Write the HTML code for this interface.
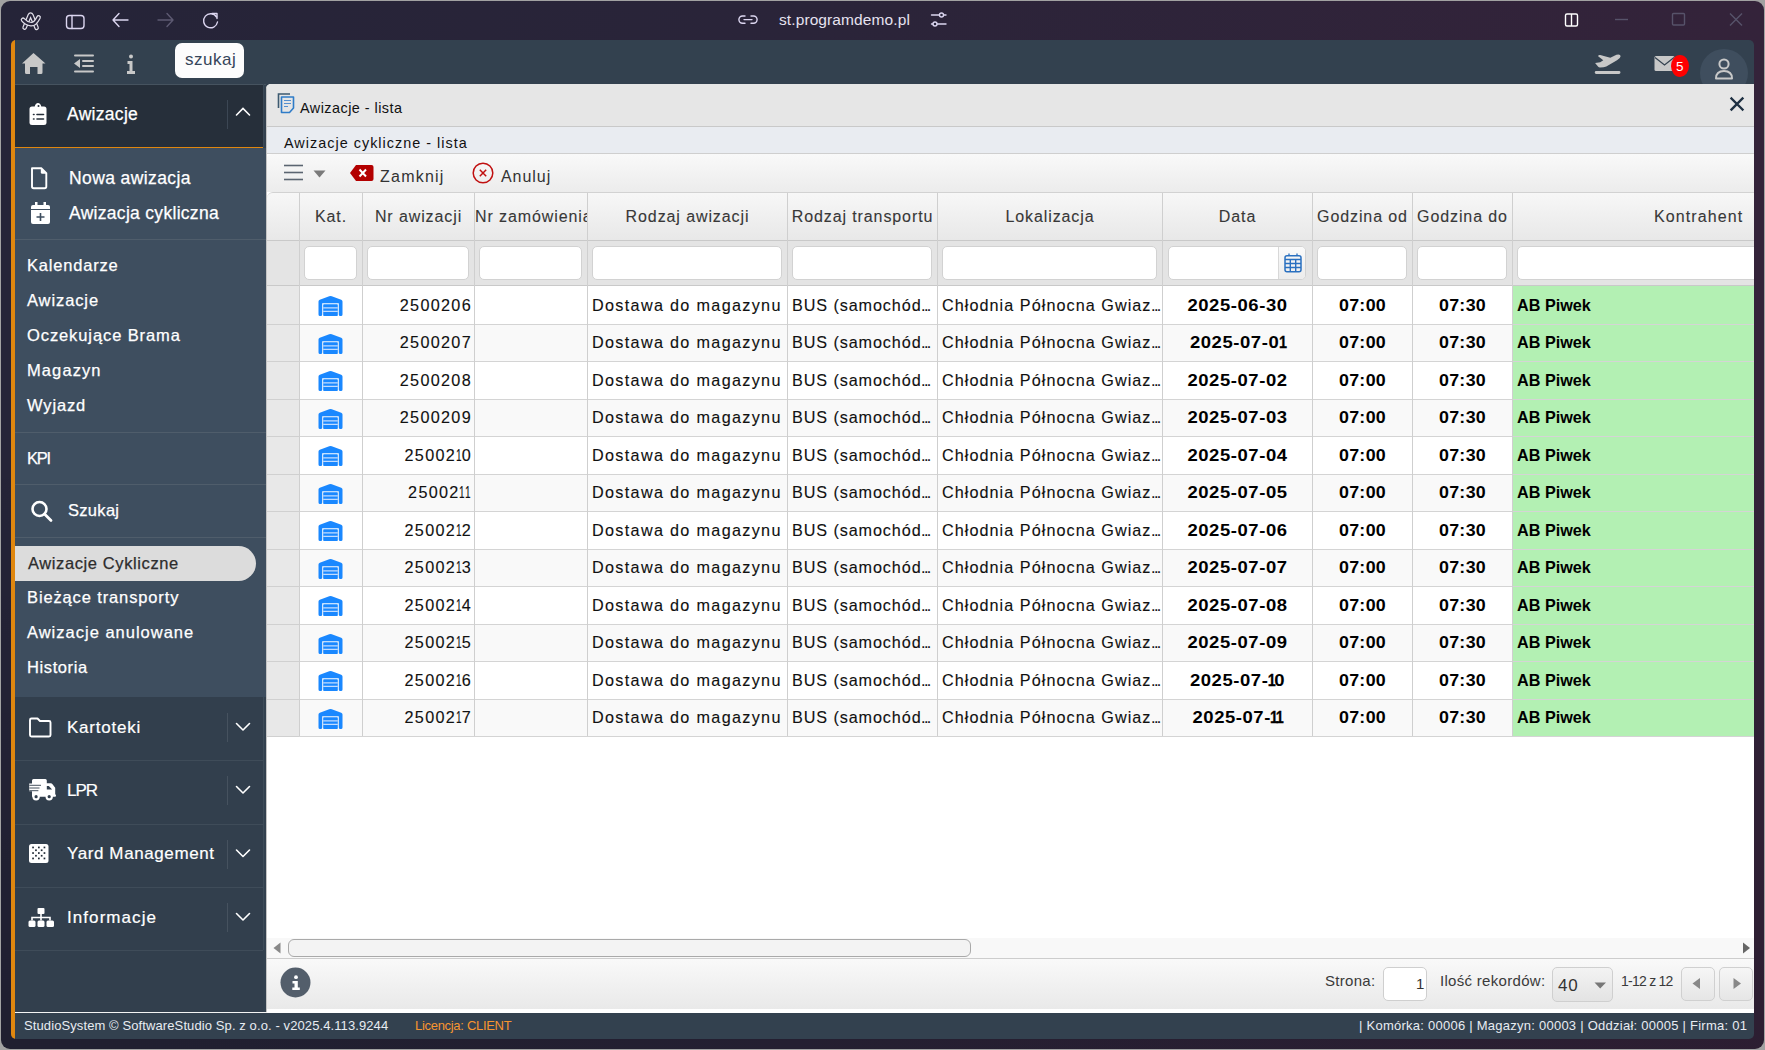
<!DOCTYPE html>
<html><head><meta charset="utf-8">
<style>
*{box-sizing:border-box;margin:0;padding:0}
html,body{width:1765px;height:1050px;overflow:hidden;background:#a2a2a2;font-family:"Liberation Sans",sans-serif;position:relative}
.a{position:absolute}
.t{position:absolute;white-space:nowrap;line-height:1}
svg{position:absolute;overflow:visible}
.sb{color:#fff;font-size:16.5px;letter-spacing:0.6px;-webkit-text-stroke:0.25px}
.sec{color:#fff;font-size:17px;letter-spacing:0.4px;-webkit-text-stroke:0.2px}
.hl{position:absolute;left:15px;width:251px;height:1px;background:#4f5d6b}
.dl{position:absolute;left:15px;width:248px;height:1px;background:#3f4c59}
.chev{position:absolute;left:236px;width:14px;height:8px}
.vsep{position:absolute;left:227px;width:1px;height:29px;background:#46525f}
.hd{font-size:16px;color:#383838;letter-spacing:0.9px}
.cl{font-size:16.2px;color:#111;letter-spacing:1.2px}
.cb{font-size:16.2px;color:#000;font-weight:bold;letter-spacing:1.6px}
.cb2{font-size:16.2px;color:#000;font-weight:bold;letter-spacing:0px}
.inp{background:#fff;border:1px solid #d2d2d2;border-radius:5px}
.pg{font-size:15px;color:#333;letter-spacing:0.7px}
.ft{font-size:13.5px;color:#dfe3ea;letter-spacing:0.35px}
.hd{font-size:16px;color:#383838;letter-spacing:0.9px;-webkit-text-stroke:0.1px #383838}
.cl{font-size:16.2px;color:#111;letter-spacing:1.32px;-webkit-text-stroke:0.12px #111}
.cb{font-size:16.2px;color:#000;font-weight:bold;letter-spacing:0.3px;transform:scaleX(1.1);transform-origin:50% 0}
.cd{font-size:16.2px;color:#000;font-weight:bold;letter-spacing:0.5px;transform:scaleX(1.14);transform-origin:50% 0}
.cb2{font-size:16.2px;color:#000;font-weight:bold;letter-spacing:0px}
.inp{background:#fff;border:1px solid #d2d2d2;border-radius:5px}
.pg{font-size:15px;color:#3a3a3a;letter-spacing:0.3px}
.ft{font-size:13px;color:#e8ecf2;letter-spacing:0.1px}
.ell{letter-spacing:-1.6px;margin-left:-0.5px}
</style></head><body>
<!-- browser window -->
<div class="a" style="left:1px;top:1px;width:1763px;height:1048px;border-radius:9px;background:linear-gradient(180deg,rgba(0,0,0,0) 0%,rgba(0,0,0,0) 40%,rgba(0,0,0,0.15) 100%),linear-gradient(90deg,#252438 0%,#2a2439 45%,#34233a 100%)"></div>
<!-- app frame -->
<div class="a" style="left:11px;top:40px;width:1743px;height:999px;background:#33414f;border-radius:5px 5px 5px 5px;overflow:hidden">
  <div class="a" style="left:0;top:0;width:4px;height:999px;background:#e0870f"></div>
  <div class="a" style="left:4px;top:657px;width:248px;height:315px;background:#323f4d"></div>
</div>

<!-- ===== chrome icons ===== -->
<svg style="left:0;top:0" width="1765" height="40">
<g fill="none" stroke-linecap="round" stroke-linejoin="round">
  <path d="M24.6 27.6 L29.6 15.6 Q30.6 13.6 31.6 15.6 L36.6 27.8" stroke="#e2e0ea" stroke-width="4.6"/>
  <path d="M24.6 27.6 L29.6 15.6 Q30.6 13.6 31.6 15.6 L36.6 27.8" stroke="#27243a" stroke-width="2.2"/>
  <path d="M23 19.8 Q26 23.5 31 24.2 Q35 24.5 38.6 17.4" stroke="#e2e0ea" stroke-width="4.6"/>
  <path d="M23 19.8 Q26 23.5 31 24.2 Q35 24.5 38.6 17.4" stroke="#27243a" stroke-width="2.2"/>
</g>

  <g fill="none" stroke="#dcd6f0" stroke-width="1.4" stroke-linecap="round" stroke-linejoin="round">
    <!-- logo -->
    
    <!-- sidebar -->
    <rect x="66.5" y="15.5" width="17.5" height="13" rx="3"/>
    <line x1="72" y1="15.5" x2="72" y2="28.5"/>
    <!-- back -->
    <path d="M128 20 H113 M119 13.5 L113 20 L119 26.5"/>
    <!-- refresh -->
    <path d="M216.5 17 A7 7 0 1 0 217.5 22"/>
    <path d="M212 13.5 H217 V18.5"/>
    <!-- link -->
    <path d="M745 16 H742.5 A3.6 3.6 0 0 0 742.5 23.2 H745 M751 16 H753.5 A3.6 3.6 0 0 1 753.5 23.2 H751 M744 19.6 H752"/>
    <!-- tune -->
    <path d="M931.5 15 H946 M931.5 24 H946"/>
    <circle cx="941.5" cy="15" r="2" fill="#27243a"/>
    <circle cx="935" cy="24" r="2" fill="#27243a"/>
  </g>
  <g fill="none" stroke="#5d5a72" stroke-width="1.4" stroke-linecap="round" stroke-linejoin="round">
    <path d="M158 20 H173 M167 13.5 L173 20 L167 26.5"/>
  </g>
  <!-- right window controls -->
  <g fill="none" stroke-width="1.4">
    <rect x="1565.5" y="14" width="12" height="12" rx="1.5" stroke="#ffffff"/>
    <line x1="1571.5" y1="14" x2="1571.5" y2="26" stroke="#ffffff"/>
    <line x1="1615" y1="19.5" x2="1628" y2="19.5" stroke="#57536a"/>
    <rect x="1672.5" y="13.5" width="12" height="11.5" rx="1" stroke="#57536a"/>
    <path d="M1730 13.5 L1742 25.5 M1742 13.5 L1730 25.5" stroke="#57536a"/>
  </g>
</svg>
<div class="t" style="left:779px;top:12px;font-size:15.5px;color:#e6e2f0;letter-spacing:0.1px">st.programdemo.pl</div>

<!-- ===== top bar ===== -->
<div class="a" style="left:15px;top:84px;width:251px;height:1px;background:#46535f"></div>
<svg style="left:0;top:0" width="300" height="90">
  <!-- home -->
  <path d="M33.5 53 L45.5 63.5 H42.5 V72.5 Q42.5 74 41 74 H37.5 V67 H30 V74 H26.5 Q25 74 25 72.5 V63.5 H22 Z" fill="#c8c8c8"/>
  <!-- indent -->
  <g stroke="#c8c8c8" stroke-width="2" stroke-linecap="round">
    <line x1="75" y1="55.5" x2="93" y2="55.5"/>
    <line x1="83" y1="61" x2="93" y2="61"/>
    <line x1="83" y1="66" x2="93" y2="66"/>
    <line x1="75" y1="71.5" x2="93" y2="71.5"/>
  </g>
  <path d="M74 63.5 L80 59 V68 Z" fill="#c8c8c8"/>
  <!-- i -->
  <circle cx="131" cy="56.5" r="2" fill="#c8c8c8"/>
  <path d="M127.5 61 H132.5 V71 H135 V74 H127 V71 H129.5 V64 H127.5 Z" fill="#c8c8c8"/>
</svg>
<div class="a" style="left:175px;top:43px;width:69px;height:35px;background:#fcfcfc;border-radius:7px"></div>
<div class="t" style="left:185px;top:51px;font-size:17px;color:#35455a;letter-spacing:0.5px">szukaj</div>

<svg style="left:1580px;top:40px" width="185" height="50">
  <!-- plane landing -->
  <path d="M15.1 22.9 L20.2 22.3 L23.3 20.2 L18.1 16.3 Q18.3 14.7 20.2 15 L30.3 17.8 L36.5 14.8 Q40.5 13.8 40.6 16.3 Q40.4 18.6 37 20.2 L26.3 26.6 Q24 27.6 20 27.6 Q18.8 27.6 18.2 26.8 Z" fill="#c8c8c8"/>
  <rect x="14.8" y="30.9" width="25.6" height="3" rx="1.3" fill="#c8c8c8"/>
  <!-- mail -->
  <rect x="74.5" y="16" width="20" height="15" rx="1.5" fill="#c8c8c8"/>
  <path d="M75 17.5 L84.5 25 L94 17.5" fill="none" stroke="#34414f" stroke-width="1.2"/>
  <ellipse cx="100" cy="26" rx="9" ry="11" fill="#ff0000"/>
  <!-- avatar -->
  <circle cx="144" cy="33" r="24" fill="#3f4e5e"/>
  <circle cx="144" cy="24" r="4.6" fill="none" stroke="#c8c8c8" stroke-width="2"/>
  <path d="M136 38.5 Q136 31 144 31 Q152 31 152 38.5 Z" fill="none" stroke="#c8c8c8" stroke-width="2" stroke-linejoin="round"/>
</svg>
<div class="t" style="left:1676px;top:60px;font-size:13.5px;color:#fff">5</div>

<!-- ===== sidebar ===== -->
<div class="a" style="left:15px;top:85px;width:248px;height:62px;background:#262f3a"></div>
<div class="a" style="left:263px;top:84px;width:1px;height:63px;background:#3b4855"></div>
<div class="a" style="left:15px;top:147px;width:248px;height:1px;background:#e0870f"></div>
<div class="vsep" style="top:100px;background:#3c4754"></div>
<svg style="left:0;top:0" width="266" height="1012">
  <!-- clipboard list -->
  <g fill="#ffffff">
    <path d="M29.5 109 Q29.5 106.5 32 106.5 H34.7 Q35.5 103 38 103 Q40.5 103 41.3 106.5 H44 Q46.5 106.5 46.5 109 V123 Q46.5 125 44 125 H32 Q29.5 125 29.5 123 Z"/>
  </g>
  <g stroke="#262f3a" stroke-width="1.6" stroke-linecap="round">
    <line x1="33.5" y1="114.5" x2="34" y2="114.5"/><line x1="37" y1="114.5" x2="43.5" y2="114.5"/>
    <line x1="33.5" y1="119" x2="34" y2="119"/><line x1="37" y1="119" x2="43.5" y2="119"/>
  </g>
  <circle cx="38.5" cy="106" r="1" fill="#262f3a"/>
  <path d="M236.5 115 L243 108.5 L249.5 115" fill="none" stroke="#fff" stroke-width="1.6" stroke-linecap="round"/>
</svg>
<div class="t sb" style="left:67px;top:106px;font-size:17.5px;letter-spacing:0.3px">Awizacje</div>

<div class="a" style="left:15px;top:148px;width:251px;height:549px;background:#3e4e5f"></div>
<div class="hl" style="top:239px"></div>
<div class="hl" style="top:432px"></div>
<div class="hl" style="top:484px"></div>
<div class="hl" style="top:537px"></div>
<svg style="left:0;top:0" width="266" height="700">
  <!-- file -->
  <path d="M32 168.3 H41.5 L46.3 173.2 V186.5 Q46.3 188.2 44.6 188.2 H33.7 Q32 188.2 32 186.5 Z" fill="none" stroke="#fff" stroke-width="1.9" stroke-linejoin="round"/>
  <path d="M40.8 168.3 L46.3 173.8 H42.3 Q40.8 173.8 40.8 172.3 Z" fill="#fff"/>
  <!-- calendar plus -->
  <path d="M31 207 Q31 205 33 205 H48 Q50 205 50 207 V222 Q50 224 48 224 H33 Q31 224 31 222 Z" fill="#fff"/>
  <rect x="35" y="202" width="2.5" height="4" fill="#fff"/>
  <rect x="43.5" y="202" width="2.5" height="4" fill="#fff"/>
  <line x1="31" y1="209.5" x2="50" y2="209.5" stroke="#3e4e5f" stroke-width="1"/>
  <path d="M40.5 213 V221 M36.5 217 H44.5" stroke="#3e4e5f" stroke-width="1.6"/>
  <!-- search -->
  <circle cx="39.5" cy="509" r="7" fill="none" stroke="#fff" stroke-width="2.6"/>
  <line x1="44.5" y1="514" x2="51" y2="520.5" stroke="#fff" stroke-width="2.8" stroke-linecap="round"/>
</svg>
<div class="t sb" style="left:69px;top:169.5px;font-size:17.5px;letter-spacing:0.4px">Nowa awizacja</div>
<div class="t sb" style="left:69px;top:205px;font-size:17.5px;letter-spacing:0.3px">Awizacja cykliczna</div>
<div class="t sb" style="letter-spacing:0.8px;left:27px;top:257px">Kalendarze</div>
<div class="t sb" style="letter-spacing:0.9px;left:27px;top:292px">Awizacje</div>
<div class="t sb" style="letter-spacing:0.9px;left:27px;top:327px">Oczekujące Brama</div>
<div class="t sb" style="letter-spacing:1.1px;left:27px;top:362px">Magazyn</div>
<div class="t sb" style="letter-spacing:0.85px;left:27px;top:397px">Wyjazd</div>
<div class="t sb" style="letter-spacing:-1.2px;left:27px;top:450px">KPI</div>
<div class="t sb" style="letter-spacing:0.3px;left:68px;top:502px">Szukaj</div>
<div class="a" style="left:15px;top:546px;width:241px;height:35px;background:#dcdcdc;border-radius:0 17.5px 17.5px 0"></div>
<div class="t sb" style="left:28px;top:555px;color:#2d2d2d">Awizacje Cykliczne</div>
<div class="t sb" style="letter-spacing:0.87px;left:27px;top:589px">Bieżące transporty</div>
<div class="t sb" style="letter-spacing:1.0px;left:27px;top:624px">Awizacje anulowane</div>
<div class="t sb" style="left:27px;top:659px">Historia</div>

<!-- collapsed sections -->
<div class="a" style="left:263px;top:697px;width:1px;height:253px;background:#3e4c59"></div>
<div class="dl" style="top:760px"></div>
<div class="dl" style="top:824px"></div>
<div class="dl" style="top:887px"></div>
<div class="dl" style="top:950px"></div>
<div class="vsep" style="top:713px"></div>
<div class="vsep" style="top:776px"></div>
<div class="vsep" style="top:840px"></div>
<div class="vsep" style="top:903px"></div>
<svg style="left:0;top:0" width="266" height="1012">
  <g fill="none" stroke="#fff" stroke-width="1.6" stroke-linecap="round" stroke-linejoin="round">
    <path d="M236.5 723.5 L243 730 L249.5 723.5"/>
    <path d="M236.5 786.5 L243 793 L249.5 786.5"/>
    <path d="M236.5 850 L243 856.5 L249.5 850"/>
    <path d="M236.5 913.5 L243 920 L249.5 913.5"/>
  </g>
  <!-- folder -->
  <path d="M30 720 Q30 718.5 31.5 718.5 H37.5 L40 721 H49 Q50.5 721 50.5 722.5 V735 Q50.5 736.5 49 736.5 H31.5 Q30 736.5 30 735 Z" fill="none" stroke="#fff" stroke-width="1.9" stroke-linejoin="round"/>
  <!-- truck fast -->
  <g fill="#fff">
    <path d="M33.5 779 H45.3 Q46.8 779 46.8 780.5 V783.3 H50.8 Q51.8 783.3 52.5 784.2 L55.2 787.8 V794.3 Q56 794.5 56 795.5 Q56 796.7 55 796.7 H32 V791.2 H29.2 V783.4 H32 V780.5 Q32 779 33.5 779 Z"/>
    <circle cx="36.1" cy="796.7" r="3.7"/>
    <circle cx="49.2" cy="796.7" r="3.7"/>
  </g>
  <g stroke="#323f4d" stroke-width="0.9">
    <line x1="29.3" y1="785.3" x2="41" y2="785.3"/>
    <line x1="29.3" y1="788" x2="39.5" y2="788"/>
    <line x1="29.3" y1="790.7" x2="38.4" y2="790.7"/>
  </g>
  <g fill="#323f4d"><circle cx="36.1" cy="796.7" r="1.6"/><circle cx="49.2" cy="796.7" r="1.6"/><path d="M46.8 786 H48.8 L52.1 789.6 H46.8 Z"/></g>
  <!-- yard grid -->
  <rect x="29" y="844" width="19.5" height="19" rx="2.5" fill="#fff"/>
  <g fill="#1e2833"><rect x="32.2" y="846.6" width="1.7" height="1.7"/><rect x="38.0" y="846.6" width="1.7" height="1.7"/><rect x="43.6" y="846.6" width="1.7" height="1.7"/><rect x="35.1" y="849.4" width="1.7" height="1.7"/><rect x="40.8" y="849.4" width="1.7" height="1.7"/><rect x="32.2" y="852.2" width="1.7" height="1.7"/><rect x="38.0" y="852.2" width="1.7" height="1.7"/><rect x="43.6" y="852.2" width="1.7" height="1.7"/><rect x="35.1" y="854.9" width="1.7" height="1.7"/><rect x="40.8" y="854.9" width="1.7" height="1.7"/><rect x="32.2" y="857.6" width="1.7" height="1.7"/><rect x="38.0" y="857.6" width="1.7" height="1.7"/><rect x="43.6" y="857.6" width="1.7" height="1.7"/></g>
  <!-- sitemap -->
  <g fill="#fff">
    <rect x="37.5" y="908" width="7" height="6" rx="1"/>
    <rect x="28.5" y="920.5" width="7" height="6.5" rx="1.5"/>
    <rect x="37.5" y="920.5" width="7" height="6.5" rx="1.5"/>
    <rect x="46.5" y="920.5" width="7.5" height="6.5" rx="1.5"/>
  </g>
  <path d="M41 914 V920.5 M32 920.5 V917.5 H50 V920.5" fill="none" stroke="#fff" stroke-width="1.6"/>
</svg>
<div class="t sec" style="left:67px;top:719px;letter-spacing:0.78px">Kartoteki</div>
<div class="t sec" style="left:67px;top:782px;letter-spacing:-1px">LPR</div>
<div class="t sec" style="left:67px;top:845px;letter-spacing:0.6px">Yard Management</div>
<div class="t sec" style="left:67px;top:909px;letter-spacing:1.07px">Informacje</div>



<!-- ===== content panel ===== -->
<div class="a" style="left:266px;top:84px;width:1488px;height:928px;background:#ffffff;border-top-left-radius:5px;overflow:hidden">
  <div class="a" style="left:0;top:0;width:1488px;height:43px;background:#e6e6e6;border-bottom:1px solid #c9c9c9"></div>
  <div class="a" style="left:0;top:43px;width:1488px;height:27px;background:#e9ecf1;border-bottom:1px solid #cfcfcf"></div>
  <div class="a" style="left:0;top:70px;width:1488px;height:38px;background:linear-gradient(#f9f9f9,#ececec);border-top-left-radius:6px"></div>
  <div class="a" style="left:0;top:0;width:1px;height:928px;background:#c4c4c4"></div>
</div>
<svg style="left:0;top:0" width="1765" height="200">
  <path d="M278.5 108 V94 H290" fill="none" stroke="#3d5a70" stroke-width="1.6"/>
  <path d="M281.5 97 H293.5 V108 L289.5 112.5 H281.5 Z" fill="#e6e6e6" stroke="#2f7cc8" stroke-width="1.6" stroke-linejoin="round"/>
  <path d="M284 100.5 H291 M284 103.5 H291 M284 106.5 H288" stroke="#5590d0" stroke-width="1.2"/>
  <path d="M1731.5 98.5 L1742.5 109.5 M1742.5 98.5 L1731.5 109.5" stroke="#1e3042" stroke-width="2.4" stroke-linecap="square"/>
  <g stroke="#5b6571" stroke-width="1.6"><line x1="284" y1="165.5" x2="303" y2="165.5"/><line x1="284" y1="172.5" x2="303" y2="172.5"/><line x1="284" y1="179.5" x2="303" y2="179.5"/></g>
  <path d="M313.5 170.5 H325.5 L319.5 177.5 Z" fill="#7a7a7a"/>
  <path d="M350 173 L356 165 H371.5 Q373.5 165 373.5 167 V179 Q373.5 181 371.5 181 H356 Z" fill="#b30000"/>
  <path d="M359.5 169.5 L366 176.5 M366 169.5 L359.5 176.5" stroke="#fff" stroke-width="2"/>
  <circle cx="483" cy="173" r="9.8" fill="none" stroke="#c01010" stroke-width="1.5"/>
  <path d="M479.8 169.8 L486.2 176.2 M486.2 169.8 L479.8 176.2" stroke="#c01010" stroke-width="1.5"/>
</svg>
<div class="t" style="left:300px;top:101px;font-size:14.4px;color:#111;letter-spacing:0.47px">Awizacje - lista</div>
<div class="t" style="left:284px;top:136px;font-size:14.4px;color:#111;letter-spacing:1.02px">Awizacje cykliczne - lista</div>
<div class="t" style="left:380px;top:168.5px;font-size:16px;color:#333;letter-spacing:1.23px">Zamknij</div>
<div class="t" style="left:501px;top:168.5px;font-size:16px;color:#333;letter-spacing:0.95px">Anuluj</div>

<!-- ===== grid ===== -->
<div class="a" style="left:267px;top:192px;width:1487px;height:820px;overflow:hidden">

<div class="a" style="left:0px;top:0px;width:1487px;height:48px;background:linear-gradient(#f7f7f7,#e8e8e8);border-top:1px solid #d2d2d2;border-top-left-radius:6px"></div>
<div class="a" style="left:0px;top:48px;width:1487px;height:1px;background:#c9c9c9"></div>
<div class="a" style="left:0px;top:49px;width:1487px;height:44px;background:#e4e4e4"></div>
<div class="a" style="left:0px;top:93px;width:1487px;height:1px;background:#c9c9c9"></div>
<div class="a" style="left:32px;top:94px;width:1213px;height:38px;background:#ffffff"></div>
<div class="a" style="left:1245px;top:94px;width:242px;height:38px;background:#b3f0b3"></div>
<div class="a" style="left:0px;top:132px;width:1487px;height:1px;background:#d4d4d4"></div>
<div class="a" style="left:32px;top:133px;width:1213px;height:36px;background:#f9f9f9"></div>
<div class="a" style="left:1245px;top:133px;width:242px;height:36px;background:#b3f0b3"></div>
<div class="a" style="left:0px;top:169px;width:1487px;height:1px;background:#d4d4d4"></div>
<div class="a" style="left:32px;top:170px;width:1213px;height:37px;background:#ffffff"></div>
<div class="a" style="left:1245px;top:170px;width:242px;height:37px;background:#b3f0b3"></div>
<div class="a" style="left:0px;top:207px;width:1487px;height:1px;background:#d4d4d4"></div>
<div class="a" style="left:32px;top:208px;width:1213px;height:36px;background:#f9f9f9"></div>
<div class="a" style="left:1245px;top:208px;width:242px;height:36px;background:#b3f0b3"></div>
<div class="a" style="left:0px;top:244px;width:1487px;height:1px;background:#d4d4d4"></div>
<div class="a" style="left:32px;top:245px;width:1213px;height:37px;background:#ffffff"></div>
<div class="a" style="left:1245px;top:245px;width:242px;height:37px;background:#b3f0b3"></div>
<div class="a" style="left:0px;top:282px;width:1487px;height:1px;background:#d4d4d4"></div>
<div class="a" style="left:32px;top:283px;width:1213px;height:36px;background:#f9f9f9"></div>
<div class="a" style="left:1245px;top:283px;width:242px;height:36px;background:#b3f0b3"></div>
<div class="a" style="left:0px;top:319px;width:1487px;height:1px;background:#d4d4d4"></div>
<div class="a" style="left:32px;top:320px;width:1213px;height:37px;background:#ffffff"></div>
<div class="a" style="left:1245px;top:320px;width:242px;height:37px;background:#b3f0b3"></div>
<div class="a" style="left:0px;top:357px;width:1487px;height:1px;background:#d4d4d4"></div>
<div class="a" style="left:32px;top:358px;width:1213px;height:36px;background:#f9f9f9"></div>
<div class="a" style="left:1245px;top:358px;width:242px;height:36px;background:#b3f0b3"></div>
<div class="a" style="left:0px;top:394px;width:1487px;height:1px;background:#d4d4d4"></div>
<div class="a" style="left:32px;top:395px;width:1213px;height:37px;background:#ffffff"></div>
<div class="a" style="left:1245px;top:395px;width:242px;height:37px;background:#b3f0b3"></div>
<div class="a" style="left:0px;top:432px;width:1487px;height:1px;background:#d4d4d4"></div>
<div class="a" style="left:32px;top:433px;width:1213px;height:36px;background:#f9f9f9"></div>
<div class="a" style="left:1245px;top:433px;width:242px;height:36px;background:#b3f0b3"></div>
<div class="a" style="left:0px;top:469px;width:1487px;height:1px;background:#d4d4d4"></div>
<div class="a" style="left:32px;top:470px;width:1213px;height:37px;background:#ffffff"></div>
<div class="a" style="left:1245px;top:470px;width:242px;height:37px;background:#b3f0b3"></div>
<div class="a" style="left:0px;top:507px;width:1487px;height:1px;background:#d4d4d4"></div>
<div class="a" style="left:32px;top:508px;width:1213px;height:36px;background:#f9f9f9"></div>
<div class="a" style="left:1245px;top:508px;width:242px;height:36px;background:#b3f0b3"></div>
<div class="a" style="left:0px;top:544px;width:1487px;height:1px;background:#d4d4d4"></div>
<div class="a" style="left:0px;top:94px;width:32px;height:450px;background:#e8e8e8"></div>
<div class="a" style="left:0px;top:132px;width:32px;height:1px;background:#d0d0d0"></div>
<div class="a" style="left:0px;top:169px;width:32px;height:1px;background:#d0d0d0"></div>
<div class="a" style="left:0px;top:207px;width:32px;height:1px;background:#d0d0d0"></div>
<div class="a" style="left:0px;top:244px;width:32px;height:1px;background:#d0d0d0"></div>
<div class="a" style="left:0px;top:282px;width:32px;height:1px;background:#d0d0d0"></div>
<div class="a" style="left:0px;top:319px;width:32px;height:1px;background:#d0d0d0"></div>
<div class="a" style="left:0px;top:357px;width:32px;height:1px;background:#d0d0d0"></div>
<div class="a" style="left:0px;top:394px;width:32px;height:1px;background:#d0d0d0"></div>
<div class="a" style="left:0px;top:432px;width:32px;height:1px;background:#d0d0d0"></div>
<div class="a" style="left:0px;top:469px;width:32px;height:1px;background:#d0d0d0"></div>
<div class="a" style="left:0px;top:507px;width:32px;height:1px;background:#d0d0d0"></div>
<div class="a" style="left:0px;top:544px;width:32px;height:1px;background:#d0d0d0"></div>
<div class="a" style="left:32px;top:1px;width:1px;height:543px;background:#cfcfcf"></div>
<div class="a" style="left:95px;top:1px;width:1px;height:543px;background:#cfcfcf"></div>
<div class="a" style="left:207px;top:1px;width:1px;height:543px;background:#cfcfcf"></div>
<div class="a" style="left:320px;top:1px;width:1px;height:543px;background:#cfcfcf"></div>
<div class="a" style="left:520px;top:1px;width:1px;height:543px;background:#cfcfcf"></div>
<div class="a" style="left:670px;top:1px;width:1px;height:543px;background:#cfcfcf"></div>
<div class="a" style="left:895px;top:1px;width:1px;height:543px;background:#cfcfcf"></div>
<div class="a" style="left:1045px;top:1px;width:1px;height:543px;background:#cfcfcf"></div>
<div class="a" style="left:1145px;top:1px;width:1px;height:543px;background:#cfcfcf"></div>
<div class="a" style="left:1245px;top:1px;width:1px;height:543px;background:#cfcfcf"></div>
<div class="a inp" style="left:37px;top:54px;width:53px;height:34px"></div>
<div class="a inp" style="left:100px;top:54px;width:102px;height:34px"></div>
<div class="a inp" style="left:212px;top:54px;width:103px;height:34px"></div>
<div class="a inp" style="left:325px;top:54px;width:190px;height:34px"></div>
<div class="a inp" style="left:525px;top:54px;width:140px;height:34px"></div>
<div class="a inp" style="left:675px;top:54px;width:215px;height:34px"></div>
<div class="a inp" style="left:901px;top:54px;width:138px;height:34px;overflow:hidden"><div class="a" style="right:0;top:0;width:27px;height:32px;background:linear-gradient(#fafafa,#ececec);border-left:1px solid #d8d8d8"></div></div>
<div class="a inp" style="left:1050px;top:54px;width:90px;height:34px"></div>
<div class="a inp" style="left:1150px;top:54px;width:90px;height:34px"></div>
<div class="a inp" style="left:1250px;top:54px;width:260px;height:34px"></div>
</div>
<div class="t hd" style="left:300px;top:209px;width:62px;text-align:center;overflow:hidden">Kat.</div>
<div class="t hd" style="left:363px;top:209px;width:111px;text-align:center;overflow:hidden">Nr awizacji</div>
<div class="t hd" style="left:475px;top:209px;width:112px;text-align:center;overflow:hidden">Nr zamówienia</div>
<div class="t hd" style="left:588px;top:209px;width:199px;text-align:center;overflow:hidden">Rodzaj awizacji</div>
<div class="t hd" style="left:788px;top:209px;width:149px;text-align:center;overflow:hidden">Rodzaj transportu</div>
<div class="t hd" style="left:938px;top:209px;width:224px;text-align:center;overflow:hidden">Lokalizacja</div>
<div class="t hd" style="left:1163px;top:209px;width:149px;text-align:center;overflow:hidden">Data</div>
<div class="t hd" style="left:1313px;top:209px;width:99px;text-align:center;overflow:hidden">Godzina od</div>
<div class="t hd" style="left:1413px;top:209px;width:99px;text-align:center;overflow:hidden">Godzina do</div>
<div class="t hd" style="left:1654px;top:209px;letter-spacing:1.1px">Kontrahent</div>
<svg style="left:1284px;top:253px" width="18" height="20">
  <rect x="1" y="2.8" width="16" height="16" rx="2" fill="none" stroke="#2a70c0" stroke-width="1.5"/>
  <path d="M1 6.5 H17 M1 10.5 H17 M1 14.5 H17 M6.3 6.5 V18.8 M11.7 6.5 V18.8" stroke="#2a70c0" stroke-width="1.4"/>
  <path d="M5 0.5 V3 M13 0.5 V3" stroke="#2a70c0" stroke-width="1.3"/>
</svg>
<svg style="left:318px;top:296.0px" width="25" height="20"><path d="M0.5 5.5 Q0.5 4.3 1.8 3.8 L11.2 0.3 Q12.5 -0.1 13.8 0.3 L23.2 3.8 Q24.5 4.3 24.5 5.5 V18.5 Q24.5 20 23 20 H22.3 Q20.8 20 20.8 18.5 V7.3 H4.2 V18.5 Q4.2 20 2.7 20 H2 Q0.5 20 0.5 18.5 Z" fill="#1a88ff"/>
<rect x="5.2" y="8.2" width="14.6" height="11.8" rx="0.8" fill="#1a88ff"/>
<path d="M5.2 11.8 H19.8 M5.2 15.3 H19.8" stroke="#c2dcff" stroke-width="1.3"/></svg>
<div class="t cl" style="left:362px;top:296.5px;width:110px;text-align:right">2500206</div>
<div class="t cl" style="left:592px;top:296.5px">Dostawa do magazynu</div>
<div class="t cl" style="left:792px;top:296.5px;letter-spacing:0.9px">BUS (samochód<span class="ell">...</span></div>
<div class="t cl" style="left:942px;top:296.5px;letter-spacing:1.05px">Chłodnia Północna Gwiaz<span class="ell">...</span></div>
<div class="t cd" style="left:1163px;top:296.5px;width:149px;text-align:center">2025-06-30</div>
<div class="t cb" style="left:1313px;top:296.5px;width:99px;text-align:center">07:00</div>
<div class="t cb" style="left:1413px;top:296.5px;width:99px;text-align:center">07:30</div>
<div class="t cb2" style="left:1517px;top:296.5px">AB Piwek</div>
<svg style="left:318px;top:333.5px" width="25" height="20"><path d="M0.5 5.5 Q0.5 4.3 1.8 3.8 L11.2 0.3 Q12.5 -0.1 13.8 0.3 L23.2 3.8 Q24.5 4.3 24.5 5.5 V18.5 Q24.5 20 23 20 H22.3 Q20.8 20 20.8 18.5 V7.3 H4.2 V18.5 Q4.2 20 2.7 20 H2 Q0.5 20 0.5 18.5 Z" fill="#1a88ff"/>
<rect x="5.2" y="8.2" width="14.6" height="11.8" rx="0.8" fill="#1a88ff"/>
<path d="M5.2 11.8 H19.8 M5.2 15.3 H19.8" stroke="#c2dcff" stroke-width="1.3"/></svg>
<div class="t cl" style="left:362px;top:334.0px;width:110px;text-align:right">2500207</div>
<div class="t cl" style="left:592px;top:334.0px">Dostawa do magazynu</div>
<div class="t cl" style="left:792px;top:334.0px;letter-spacing:0.9px">BUS (samochód<span class="ell">...</span></div>
<div class="t cl" style="left:942px;top:334.0px;letter-spacing:1.05px">Chłodnia Północna Gwiaz<span class="ell">...</span></div>
<div class="t cd" style="left:1163px;top:334.0px;width:149px;text-align:center">2025-07-0<span style="display:inline-block;width:4.6px;margin-right:0.5px;letter-spacing:0"><span style="display:inline-block;transform:scaleX(0.78);transform-origin:0 0;margin-left:-0.6px;-webkit-text-stroke:0.3px currentColor">1</span></span></div>
<div class="t cb" style="left:1313px;top:334.0px;width:99px;text-align:center">07:00</div>
<div class="t cb" style="left:1413px;top:334.0px;width:99px;text-align:center">07:30</div>
<div class="t cb2" style="left:1517px;top:334.0px">AB Piwek</div>
<svg style="left:318px;top:371.0px" width="25" height="20"><path d="M0.5 5.5 Q0.5 4.3 1.8 3.8 L11.2 0.3 Q12.5 -0.1 13.8 0.3 L23.2 3.8 Q24.5 4.3 24.5 5.5 V18.5 Q24.5 20 23 20 H22.3 Q20.8 20 20.8 18.5 V7.3 H4.2 V18.5 Q4.2 20 2.7 20 H2 Q0.5 20 0.5 18.5 Z" fill="#1a88ff"/>
<rect x="5.2" y="8.2" width="14.6" height="11.8" rx="0.8" fill="#1a88ff"/>
<path d="M5.2 11.8 H19.8 M5.2 15.3 H19.8" stroke="#c2dcff" stroke-width="1.3"/></svg>
<div class="t cl" style="left:362px;top:371.5px;width:110px;text-align:right">2500208</div>
<div class="t cl" style="left:592px;top:371.5px">Dostawa do magazynu</div>
<div class="t cl" style="left:792px;top:371.5px;letter-spacing:0.9px">BUS (samochód<span class="ell">...</span></div>
<div class="t cl" style="left:942px;top:371.5px;letter-spacing:1.05px">Chłodnia Północna Gwiaz<span class="ell">...</span></div>
<div class="t cd" style="left:1163px;top:371.5px;width:149px;text-align:center">2025-07-02</div>
<div class="t cb" style="left:1313px;top:371.5px;width:99px;text-align:center">07:00</div>
<div class="t cb" style="left:1413px;top:371.5px;width:99px;text-align:center">07:30</div>
<div class="t cb2" style="left:1517px;top:371.5px">AB Piwek</div>
<svg style="left:318px;top:408.5px" width="25" height="20"><path d="M0.5 5.5 Q0.5 4.3 1.8 3.8 L11.2 0.3 Q12.5 -0.1 13.8 0.3 L23.2 3.8 Q24.5 4.3 24.5 5.5 V18.5 Q24.5 20 23 20 H22.3 Q20.8 20 20.8 18.5 V7.3 H4.2 V18.5 Q4.2 20 2.7 20 H2 Q0.5 20 0.5 18.5 Z" fill="#1a88ff"/>
<rect x="5.2" y="8.2" width="14.6" height="11.8" rx="0.8" fill="#1a88ff"/>
<path d="M5.2 11.8 H19.8 M5.2 15.3 H19.8" stroke="#c2dcff" stroke-width="1.3"/></svg>
<div class="t cl" style="left:362px;top:409.0px;width:110px;text-align:right">2500209</div>
<div class="t cl" style="left:592px;top:409.0px">Dostawa do magazynu</div>
<div class="t cl" style="left:792px;top:409.0px;letter-spacing:0.9px">BUS (samochód<span class="ell">...</span></div>
<div class="t cl" style="left:942px;top:409.0px;letter-spacing:1.05px">Chłodnia Północna Gwiaz<span class="ell">...</span></div>
<div class="t cd" style="left:1163px;top:409.0px;width:149px;text-align:center">2025-07-03</div>
<div class="t cb" style="left:1313px;top:409.0px;width:99px;text-align:center">07:00</div>
<div class="t cb" style="left:1413px;top:409.0px;width:99px;text-align:center">07:30</div>
<div class="t cb2" style="left:1517px;top:409.0px">AB Piwek</div>
<svg style="left:318px;top:446.0px" width="25" height="20"><path d="M0.5 5.5 Q0.5 4.3 1.8 3.8 L11.2 0.3 Q12.5 -0.1 13.8 0.3 L23.2 3.8 Q24.5 4.3 24.5 5.5 V18.5 Q24.5 20 23 20 H22.3 Q20.8 20 20.8 18.5 V7.3 H4.2 V18.5 Q4.2 20 2.7 20 H2 Q0.5 20 0.5 18.5 Z" fill="#1a88ff"/>
<rect x="5.2" y="8.2" width="14.6" height="11.8" rx="0.8" fill="#1a88ff"/>
<path d="M5.2 11.8 H19.8 M5.2 15.3 H19.8" stroke="#c2dcff" stroke-width="1.3"/></svg>
<div class="t cl" style="left:362px;top:446.5px;width:110px;text-align:right">25002<span style="display:inline-block;width:4.2px;margin-right:1.32px;letter-spacing:0"><span style="display:inline-block;transform:scaleX(0.62);transform-origin:0 0;margin-left:-0.6px">1</span></span>0</div>
<div class="t cl" style="left:592px;top:446.5px">Dostawa do magazynu</div>
<div class="t cl" style="left:792px;top:446.5px;letter-spacing:0.9px">BUS (samochód<span class="ell">...</span></div>
<div class="t cl" style="left:942px;top:446.5px;letter-spacing:1.05px">Chłodnia Północna Gwiaz<span class="ell">...</span></div>
<div class="t cd" style="left:1163px;top:446.5px;width:149px;text-align:center">2025-07-04</div>
<div class="t cb" style="left:1313px;top:446.5px;width:99px;text-align:center">07:00</div>
<div class="t cb" style="left:1413px;top:446.5px;width:99px;text-align:center">07:30</div>
<div class="t cb2" style="left:1517px;top:446.5px">AB Piwek</div>
<svg style="left:318px;top:483.5px" width="25" height="20"><path d="M0.5 5.5 Q0.5 4.3 1.8 3.8 L11.2 0.3 Q12.5 -0.1 13.8 0.3 L23.2 3.8 Q24.5 4.3 24.5 5.5 V18.5 Q24.5 20 23 20 H22.3 Q20.8 20 20.8 18.5 V7.3 H4.2 V18.5 Q4.2 20 2.7 20 H2 Q0.5 20 0.5 18.5 Z" fill="#1a88ff"/>
<rect x="5.2" y="8.2" width="14.6" height="11.8" rx="0.8" fill="#1a88ff"/>
<path d="M5.2 11.8 H19.8 M5.2 15.3 H19.8" stroke="#c2dcff" stroke-width="1.3"/></svg>
<div class="t cl" style="left:362px;top:484.0px;width:108.7px;text-align:right">25002<span style="display:inline-block;width:4.2px;margin-right:1.32px;letter-spacing:0"><span style="display:inline-block;transform:scaleX(0.62);transform-origin:0 0;margin-left:-0.6px">1</span></span><span style="display:inline-block;width:4.2px;margin-right:1.32px;letter-spacing:0"><span style="display:inline-block;transform:scaleX(0.62);transform-origin:0 0;margin-left:-0.6px">1</span></span></div>
<div class="t cl" style="left:592px;top:484.0px">Dostawa do magazynu</div>
<div class="t cl" style="left:792px;top:484.0px;letter-spacing:0.9px">BUS (samochód<span class="ell">...</span></div>
<div class="t cl" style="left:942px;top:484.0px;letter-spacing:1.05px">Chłodnia Północna Gwiaz<span class="ell">...</span></div>
<div class="t cd" style="left:1163px;top:484.0px;width:149px;text-align:center">2025-07-05</div>
<div class="t cb" style="left:1313px;top:484.0px;width:99px;text-align:center">07:00</div>
<div class="t cb" style="left:1413px;top:484.0px;width:99px;text-align:center">07:30</div>
<div class="t cb2" style="left:1517px;top:484.0px">AB Piwek</div>
<svg style="left:318px;top:521.0px" width="25" height="20"><path d="M0.5 5.5 Q0.5 4.3 1.8 3.8 L11.2 0.3 Q12.5 -0.1 13.8 0.3 L23.2 3.8 Q24.5 4.3 24.5 5.5 V18.5 Q24.5 20 23 20 H22.3 Q20.8 20 20.8 18.5 V7.3 H4.2 V18.5 Q4.2 20 2.7 20 H2 Q0.5 20 0.5 18.5 Z" fill="#1a88ff"/>
<rect x="5.2" y="8.2" width="14.6" height="11.8" rx="0.8" fill="#1a88ff"/>
<path d="M5.2 11.8 H19.8 M5.2 15.3 H19.8" stroke="#c2dcff" stroke-width="1.3"/></svg>
<div class="t cl" style="left:362px;top:521.5px;width:110px;text-align:right">25002<span style="display:inline-block;width:4.2px;margin-right:1.32px;letter-spacing:0"><span style="display:inline-block;transform:scaleX(0.62);transform-origin:0 0;margin-left:-0.6px">1</span></span>2</div>
<div class="t cl" style="left:592px;top:521.5px">Dostawa do magazynu</div>
<div class="t cl" style="left:792px;top:521.5px;letter-spacing:0.9px">BUS (samochód<span class="ell">...</span></div>
<div class="t cl" style="left:942px;top:521.5px;letter-spacing:1.05px">Chłodnia Północna Gwiaz<span class="ell">...</span></div>
<div class="t cd" style="left:1163px;top:521.5px;width:149px;text-align:center">2025-07-06</div>
<div class="t cb" style="left:1313px;top:521.5px;width:99px;text-align:center">07:00</div>
<div class="t cb" style="left:1413px;top:521.5px;width:99px;text-align:center">07:30</div>
<div class="t cb2" style="left:1517px;top:521.5px">AB Piwek</div>
<svg style="left:318px;top:558.5px" width="25" height="20"><path d="M0.5 5.5 Q0.5 4.3 1.8 3.8 L11.2 0.3 Q12.5 -0.1 13.8 0.3 L23.2 3.8 Q24.5 4.3 24.5 5.5 V18.5 Q24.5 20 23 20 H22.3 Q20.8 20 20.8 18.5 V7.3 H4.2 V18.5 Q4.2 20 2.7 20 H2 Q0.5 20 0.5 18.5 Z" fill="#1a88ff"/>
<rect x="5.2" y="8.2" width="14.6" height="11.8" rx="0.8" fill="#1a88ff"/>
<path d="M5.2 11.8 H19.8 M5.2 15.3 H19.8" stroke="#c2dcff" stroke-width="1.3"/></svg>
<div class="t cl" style="left:362px;top:559.0px;width:110px;text-align:right">25002<span style="display:inline-block;width:4.2px;margin-right:1.32px;letter-spacing:0"><span style="display:inline-block;transform:scaleX(0.62);transform-origin:0 0;margin-left:-0.6px">1</span></span>3</div>
<div class="t cl" style="left:592px;top:559.0px">Dostawa do magazynu</div>
<div class="t cl" style="left:792px;top:559.0px;letter-spacing:0.9px">BUS (samochód<span class="ell">...</span></div>
<div class="t cl" style="left:942px;top:559.0px;letter-spacing:1.05px">Chłodnia Północna Gwiaz<span class="ell">...</span></div>
<div class="t cd" style="left:1163px;top:559.0px;width:149px;text-align:center">2025-07-07</div>
<div class="t cb" style="left:1313px;top:559.0px;width:99px;text-align:center">07:00</div>
<div class="t cb" style="left:1413px;top:559.0px;width:99px;text-align:center">07:30</div>
<div class="t cb2" style="left:1517px;top:559.0px">AB Piwek</div>
<svg style="left:318px;top:596.0px" width="25" height="20"><path d="M0.5 5.5 Q0.5 4.3 1.8 3.8 L11.2 0.3 Q12.5 -0.1 13.8 0.3 L23.2 3.8 Q24.5 4.3 24.5 5.5 V18.5 Q24.5 20 23 20 H22.3 Q20.8 20 20.8 18.5 V7.3 H4.2 V18.5 Q4.2 20 2.7 20 H2 Q0.5 20 0.5 18.5 Z" fill="#1a88ff"/>
<rect x="5.2" y="8.2" width="14.6" height="11.8" rx="0.8" fill="#1a88ff"/>
<path d="M5.2 11.8 H19.8 M5.2 15.3 H19.8" stroke="#c2dcff" stroke-width="1.3"/></svg>
<div class="t cl" style="left:362px;top:596.5px;width:110px;text-align:right">25002<span style="display:inline-block;width:4.2px;margin-right:1.32px;letter-spacing:0"><span style="display:inline-block;transform:scaleX(0.62);transform-origin:0 0;margin-left:-0.6px">1</span></span>4</div>
<div class="t cl" style="left:592px;top:596.5px">Dostawa do magazynu</div>
<div class="t cl" style="left:792px;top:596.5px;letter-spacing:0.9px">BUS (samochód<span class="ell">...</span></div>
<div class="t cl" style="left:942px;top:596.5px;letter-spacing:1.05px">Chłodnia Północna Gwiaz<span class="ell">...</span></div>
<div class="t cd" style="left:1163px;top:596.5px;width:149px;text-align:center">2025-07-08</div>
<div class="t cb" style="left:1313px;top:596.5px;width:99px;text-align:center">07:00</div>
<div class="t cb" style="left:1413px;top:596.5px;width:99px;text-align:center">07:30</div>
<div class="t cb2" style="left:1517px;top:596.5px">AB Piwek</div>
<svg style="left:318px;top:633.5px" width="25" height="20"><path d="M0.5 5.5 Q0.5 4.3 1.8 3.8 L11.2 0.3 Q12.5 -0.1 13.8 0.3 L23.2 3.8 Q24.5 4.3 24.5 5.5 V18.5 Q24.5 20 23 20 H22.3 Q20.8 20 20.8 18.5 V7.3 H4.2 V18.5 Q4.2 20 2.7 20 H2 Q0.5 20 0.5 18.5 Z" fill="#1a88ff"/>
<rect x="5.2" y="8.2" width="14.6" height="11.8" rx="0.8" fill="#1a88ff"/>
<path d="M5.2 11.8 H19.8 M5.2 15.3 H19.8" stroke="#c2dcff" stroke-width="1.3"/></svg>
<div class="t cl" style="left:362px;top:634.0px;width:110px;text-align:right">25002<span style="display:inline-block;width:4.2px;margin-right:1.32px;letter-spacing:0"><span style="display:inline-block;transform:scaleX(0.62);transform-origin:0 0;margin-left:-0.6px">1</span></span>5</div>
<div class="t cl" style="left:592px;top:634.0px">Dostawa do magazynu</div>
<div class="t cl" style="left:792px;top:634.0px;letter-spacing:0.9px">BUS (samochód<span class="ell">...</span></div>
<div class="t cl" style="left:942px;top:634.0px;letter-spacing:1.05px">Chłodnia Północna Gwiaz<span class="ell">...</span></div>
<div class="t cd" style="left:1163px;top:634.0px;width:149px;text-align:center">2025-07-09</div>
<div class="t cb" style="left:1313px;top:634.0px;width:99px;text-align:center">07:00</div>
<div class="t cb" style="left:1413px;top:634.0px;width:99px;text-align:center">07:30</div>
<div class="t cb2" style="left:1517px;top:634.0px">AB Piwek</div>
<svg style="left:318px;top:671.0px" width="25" height="20"><path d="M0.5 5.5 Q0.5 4.3 1.8 3.8 L11.2 0.3 Q12.5 -0.1 13.8 0.3 L23.2 3.8 Q24.5 4.3 24.5 5.5 V18.5 Q24.5 20 23 20 H22.3 Q20.8 20 20.8 18.5 V7.3 H4.2 V18.5 Q4.2 20 2.7 20 H2 Q0.5 20 0.5 18.5 Z" fill="#1a88ff"/>
<rect x="5.2" y="8.2" width="14.6" height="11.8" rx="0.8" fill="#1a88ff"/>
<path d="M5.2 11.8 H19.8 M5.2 15.3 H19.8" stroke="#c2dcff" stroke-width="1.3"/></svg>
<div class="t cl" style="left:362px;top:671.5px;width:110px;text-align:right">25002<span style="display:inline-block;width:4.2px;margin-right:1.32px;letter-spacing:0"><span style="display:inline-block;transform:scaleX(0.62);transform-origin:0 0;margin-left:-0.6px">1</span></span>6</div>
<div class="t cl" style="left:592px;top:671.5px">Dostawa do magazynu</div>
<div class="t cl" style="left:792px;top:671.5px;letter-spacing:0.9px">BUS (samochód<span class="ell">...</span></div>
<div class="t cl" style="left:942px;top:671.5px;letter-spacing:1.05px">Chłodnia Północna Gwiaz<span class="ell">...</span></div>
<div class="t cd" style="left:1163px;top:671.5px;width:149px;text-align:center">2025-07-<span style="display:inline-block;width:4.6px;margin-right:0.5px;letter-spacing:0"><span style="display:inline-block;transform:scaleX(0.78);transform-origin:0 0;margin-left:-0.6px;-webkit-text-stroke:0.3px currentColor">1</span></span>0</div>
<div class="t cb" style="left:1313px;top:671.5px;width:99px;text-align:center">07:00</div>
<div class="t cb" style="left:1413px;top:671.5px;width:99px;text-align:center">07:30</div>
<div class="t cb2" style="left:1517px;top:671.5px">AB Piwek</div>
<svg style="left:318px;top:708.5px" width="25" height="20"><path d="M0.5 5.5 Q0.5 4.3 1.8 3.8 L11.2 0.3 Q12.5 -0.1 13.8 0.3 L23.2 3.8 Q24.5 4.3 24.5 5.5 V18.5 Q24.5 20 23 20 H22.3 Q20.8 20 20.8 18.5 V7.3 H4.2 V18.5 Q4.2 20 2.7 20 H2 Q0.5 20 0.5 18.5 Z" fill="#1a88ff"/>
<rect x="5.2" y="8.2" width="14.6" height="11.8" rx="0.8" fill="#1a88ff"/>
<path d="M5.2 11.8 H19.8 M5.2 15.3 H19.8" stroke="#c2dcff" stroke-width="1.3"/></svg>
<div class="t cl" style="left:362px;top:709.0px;width:110px;text-align:right">25002<span style="display:inline-block;width:4.2px;margin-right:1.32px;letter-spacing:0"><span style="display:inline-block;transform:scaleX(0.62);transform-origin:0 0;margin-left:-0.6px">1</span></span>7</div>
<div class="t cl" style="left:592px;top:709.0px">Dostawa do magazynu</div>
<div class="t cl" style="left:792px;top:709.0px;letter-spacing:0.9px">BUS (samochód<span class="ell">...</span></div>
<div class="t cl" style="left:942px;top:709.0px;letter-spacing:1.05px">Chłodnia Północna Gwiaz<span class="ell">...</span></div>
<div class="t cd" style="left:1163px;top:709.0px;width:149px;text-align:center">2025-07-<span style="display:inline-block;width:4.6px;margin-right:0.5px;letter-spacing:0"><span style="display:inline-block;transform:scaleX(0.78);transform-origin:0 0;margin-left:-0.6px;-webkit-text-stroke:0.3px currentColor">1</span></span><span style="display:inline-block;width:4.6px;margin-right:0.5px;letter-spacing:0"><span style="display:inline-block;transform:scaleX(0.78);transform-origin:0 0;margin-left:-0.6px;-webkit-text-stroke:0.3px currentColor">1</span></span></div>
<div class="t cb" style="left:1313px;top:709.0px;width:99px;text-align:center">07:00</div>
<div class="t cb" style="left:1413px;top:709.0px;width:99px;text-align:center">07:30</div>
<div class="t cb2" style="left:1517px;top:709.0px">AB Piwek</div>

<div class="a" style="left:267px;top:938px;width:1487px;height:20px;background:#f8f8f8"></div>
<div class="a" style="left:267px;top:958px;width:1487px;height:1px;background:#cdcdcd"></div>
<div class="a" style="left:288px;top:939px;width:683px;height:18px;background:#f3f3f3;border:1px solid #a9a9a9;border-radius:6px"></div>
<svg style="left:0;top:930px" width="1765" height="30">
  <path d="M273.5 18 L280.5 12.5 V23.5 Z" fill="#888"/>
  <path d="M1750 18 L1743 12.5 V23.5 Z" fill="#666"/>
</svg>
<div class="a" style="left:267px;top:959px;width:1487px;height:50px;background:linear-gradient(#f9f9f9,#e9e9e9)"></div>
<div class="a" style="left:267px;top:1009px;width:1487px;height:4px;background:#ffffff"></div>
<div class="a" style="left:15px;top:1012px;width:252px;height:1px;background:#f4f4f4"></div>
<svg style="left:280px;top:967px" width="32" height="32">
  <circle cx="15.5" cy="15.5" r="15" fill="#535e6b"/>
  <circle cx="16" cy="10.2" r="1.9" fill="#fff"/>
  <path d="M12.5 14 H17.8 V20.5 H19.8 V23 H12.3 V20.5 H14.5 V16.4 H12.5 Z" fill="#fff"/>
</svg>
<div class="t pg" style="left:1325px;top:973px">Strona:</div>
<div class="a" style="left:1383px;top:967px;width:44px;height:34px;background:#fff;border:1px solid #cfcfcf;border-radius:5px"></div>
<div class="t pg" style="left:1416px;top:976px;color:#333">1</div>
<div class="t pg" style="left:1440px;top:973px">Ilość rekordów:</div>
<div class="a" style="left:1552px;top:967px;width:61px;height:35px;background:linear-gradient(#f3f3f3,#e3e3e3);border:1px solid #cfcfcf;border-radius:5px"></div>
<div class="t" style="left:1558px;top:977px;font-size:17px;color:#333;letter-spacing:0.8px">40</div>
<div class="t pg" style="left:1621px;top:974px;font-size:14px;letter-spacing:-0.75px">1-12 z 12</div>
<div class="a" style="left:1681px;top:967px;width:34px;height:34px;background:linear-gradient(#f6f6f6,#e6e6e6);border:1px solid #d0d0d0;border-radius:5px"></div>
<div class="a" style="left:1719px;top:967px;width:34px;height:34px;background:linear-gradient(#f6f6f6,#e6e6e6);border:1px solid #d0d0d0;border-radius:5px"></div>
<svg style="left:0;top:960px" width="1765" height="50">
  <path d="M1594.5 22.5 H1606 L1600.2 28.5 Z" fill="#777"/>
  <path d="M1692.5 23.5 L1700 18 V29 Z" fill="#888"/>
  <path d="M1741 23.5 L1733.5 18 V29 Z" fill="#888"/>
</svg>
<div class="t ft" style="left:24px;top:1019px">StudioSystem © SoftwareStudio Sp. z o.o. - v2025.4.113.9244</div>
<div class="t ft" style="left:415px;top:1019px;color:#f7952f;letter-spacing:-0.3px">Licencja: CLIENT</div>
<div class="t ft" style="left:1359px;top:1019px;letter-spacing:0.25px">| Komórka: 00006 | Magazyn: 00003 | Oddział: 00005 | Firma: 01</div>
</body></html>
